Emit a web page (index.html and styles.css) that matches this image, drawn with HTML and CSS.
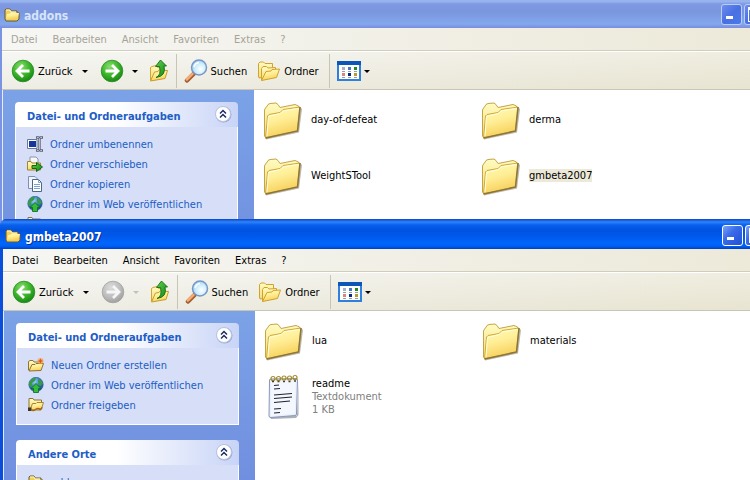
FILE: index.html
```html
<!DOCTYPE html>
<html lang="de">
<head>
<meta charset="utf-8">
<title>gmbeta2007</title>
<link rel="stylesheet" href="styles.css">
</head>
<body>
<svg class="sprite" aria-hidden="true">
  <defs>
    <linearGradient id="g-folder" x1="0" y1="0" x2="0.3" y2="1"><stop offset="0" stop-color="#fffdb8"/><stop offset="0.5" stop-color="#ffee96"/><stop offset="1" stop-color="#f7d05a"/></linearGradient>
    <linearGradient id="g-tab" x1="0" y1="0" x2="0" y2="1"><stop offset="0" stop-color="#fffbc0"/><stop offset="1" stop-color="#f3dc7c"/></linearGradient>
    <radialGradient id="g-green" cx="0.4" cy="0.3" r="0.75"><stop offset="0" stop-color="#8ade70"/><stop offset="0.5" stop-color="#3fb72c"/><stop offset="1" stop-color="#138411"/></radialGradient>
    <radialGradient id="g-grey" cx="0.4" cy="0.3" r="0.75"><stop offset="0" stop-color="#dcdcdc"/><stop offset="0.6" stop-color="#bcbcbc"/><stop offset="1" stop-color="#9c9c9c"/></radialGradient>
    <radialGradient id="g-lens" cx="0.6" cy="0.6" r="0.7"><stop offset="0" stop-color="#ffffff"/><stop offset="0.5" stop-color="#cdeefc"/><stop offset="1" stop-color="#93c8f2"/></radialGradient>
    <radialGradient id="g-globe" cx="0.4" cy="0.3" r="0.8"><stop offset="0" stop-color="#9ad4f6"/><stop offset="0.5" stop-color="#2f78cc"/><stop offset="1" stop-color="#123d86"/></radialGradient>
    <linearGradient id="g-arrow" x1="0" y1="0" x2="1" y2="1"><stop offset="0" stop-color="#5fd34e"/><stop offset="1" stop-color="#118512"/></linearGradient>
  </defs>

  <symbol id="folder-large" viewBox="0 0 48 48">
    <path d="M8 44.500 41 37.500 44 14 42 12 39 36 8 43Z" fill="#6d6244" opacity="0.45"/>
    <path d="M6.500 41V15L7.500 13 8.500 12 10 9.500 12 8.500 18 8 20 9.500 22 12.500 37 9.500 40.500 11 41 15 38 36 8 43Z" fill="url(#g-tab)" stroke="#c5a445"/>
    <path d="M7.500 43 9.500 21 11 19.500 22 17.500 25 14.500 42 12 39.500 36Z" fill="url(#g-folder)" stroke="#d3aa39"/>
    <path d="M9 41 10.500 21.500 22.500 18.500 25.500 15.800 40.500 13.500" fill="none" stroke="#fffde0"/>
    <path d="M7.500 43 39.500 36 42 12" fill="none" stroke="#8b753b" stroke-width="1.500"/>
  </symbol>

  <symbol id="folder-small" viewBox="0 0 16 16">
    <path d="M1 12V3L2 2H6L7 4H13V6H15V12L13 14H2Z" fill="#f1cf5d" stroke="#695a30"/>
    <path d="M2 12 3 7 6 6.500 7 5.500 15 6 13.500 12.500Z" fill="url(#g-folder)"/>
    <path d="M2 3H6L7 5H12" fill="none" stroke="#fffbc8"/>
  </symbol>

  <symbol id="notepad" viewBox="0 0 48 48">
    <path d="M11 45 38 43.500 39.500 10V43L37 46 12 47Z" fill="#747b8c" opacity="0.6"/>
    <path d="M10.500 9Q10 7 12 7L37 6.500Q38.500 6.500 38.500 8L37.500 42Q37.500 43.500 36 43.500L12 45.500Q10 45.500 10 44Z" fill="#e9effc" stroke="#8898b8"/>
    <path d="M12 10 36.500 9 36 41.500 12 44Z" fill="#f4f7fe"/>
    <path d="M15 13.500 20 13M15 17 21 16.500M15 23 33 21.500M15 26.500 33 25M15 30.500 31 29M15 37 22 36.500M15 41 21 40.500" stroke="#1f232d" stroke-width="1.200"/>
    <g fill="none" stroke="#a28b27" stroke-width="1.200"><circle cx="14" cy="6.500" r="2"/><circle cx="19.500" cy="6.500" r="2"/><circle cx="25" cy="6" r="2"/><circle cx="30.500" cy="6" r="2"/><circle cx="36" cy="5.500" r="2"/></g>
    <path d="M13 9.500h2M18.500 9.500h2M24 9.500h2M29.500 9.500h2M35 9h2" stroke="#4b431d" stroke-width="1.500"/>
  </symbol>

  <symbol id="nav-back" viewBox="0 0 24 24">
    <circle cx="12" cy="12" r="10.800" fill="url(#g-green)" stroke="#2b8a24" stroke-width="0.800"/>
    <path d="M18.500 12H7M12 6 6 12 12 18" fill="none" stroke="#fff" stroke-width="2.800"/>
  </symbol>
  <symbol id="nav-forward" viewBox="0 0 24 24">
    <circle cx="12" cy="12" r="10.800" fill="url(#g-green)" stroke="#2b8a24" stroke-width="0.800"/>
    <path d="M5.500 12H17M12 6 18 12 12 18" fill="none" stroke="#fff" stroke-width="2.800"/>
  </symbol>
  <symbol id="nav-forward-off" viewBox="0 0 24 24">
    <circle cx="12" cy="12" r="10.800" fill="url(#g-grey)" stroke="#a2a2a2" stroke-width="0.800"/>
    <path d="M5.500 12H17M12 6 18 12 12 18" fill="none" stroke="#f6f6f6" stroke-width="2.800"/>
  </symbol>

  <symbol id="folder-up" viewBox="0 0 24 24">
    <path d="M3.500 21V8.500L5 7.500 9 6.500 10.500 8.500 16 7.500V19Z" fill="url(#g-tab)" stroke="#d2a62f"/>
    <path d="M3.500 22 7.500 13 11 12.500 12 11 20.500 11.500 18 19.500Z" fill="url(#g-folder)" stroke="#c99c2b"/>
    <path d="M9 18.500Q14.500 16.500 12.500 7.500H8.500L13.500 1 19.500 7H17Q19.500 17 9 18.500Z" fill="url(#g-arrow)" stroke="#156d19" stroke-width="0.900"/>
  </symbol>

  <symbol id="search" viewBox="0 0 24 24">
    <path d="M3 21.500 9.500 15" stroke="#a35e33" stroke-width="4.500" stroke-linecap="round"/>
    <path d="M2.800 20.500 8.500 14.800" stroke="#f5ad72" stroke-width="2.500" stroke-linecap="round"/>
    <circle cx="15" cy="8.500" r="7.500" fill="url(#g-lens)" stroke="#7997c6" stroke-width="1.500"/>
    <path d="M10 8Q11 4 15 3.500" fill="none" stroke="#fff" stroke-width="1.500"/>
  </symbol>

  <symbol id="folders" viewBox="0 0 24 24">
    <path d="M1.500 17V4.500L3 3H6.500L8 4.500H15.500V16L2 19Z" fill="url(#g-tab)" stroke="#d1a22c"/>
    <path d="M4.500 21V9.500L6 7.500H9.500L11 9 18.500 8.500V18Z" fill="url(#g-tab)" stroke="#d1a22c"/>
    <path d="M4.500 21.500 9 12.500 14 12 15 10.500 22.500 10 19.500 18.500Z" fill="url(#g-folder)" stroke="#d1a22c"/>
  </symbol>

  <symbol id="views" viewBox="0 0 24 24">
    <rect x="1" y="3" width="22" height="18" fill="#fff" stroke="#2f7fdc" stroke-width="2"/>
    <path d="M0 2H24V6H0Z" fill="#0b56b7"/>
    <path d="M5 8h3v3H5z" fill="#a9afc7"/><path d="M5 14h3v3H5z" fill="#de8378"/>
    <path d="M11 8h3v3h-3z" fill="#4879c3"/><path d="M11 14h3v3h-3z" fill="#092a83"/>
    <path d="M17 8h3v3h-3z" fill="#228a23"/><path d="M17 14h3v3h-3z" fill="#b49b34"/>
    <path d="M5 12.500h3M11 12.500h3M17 12.500h3M5 18.500h3M11 18.500h3M17 18.500h3" stroke="#9a9ca6"/>
  </symbol>

  <symbol id="chevrons" viewBox="0 0 18 18">
    <circle cx="9.500" cy="9.500" r="8" fill="#7d89b6" opacity="0.6"/>
    <circle cx="9" cy="9" r="7.500" fill="#fff" stroke="#b9c3df"/>
    <path d="M6 8.500 9 5.500 12 8.500M6 12.500 9 9.500 12 12.500" fill="none" stroke="#1c2f63" stroke-width="1.500"/>
  </symbol>

  <symbol id="rename" viewBox="0 0 16 16">
    <path d="M.5 3.500H10V12.500H.5Z" fill="#fff" stroke="#6d7993"/>
    <path d="M2 5H9V11H2Z" fill="#14389f"/>
    <path d="M9 1.500H11.500L12.500 2.500 13.500 1.500H16M12.500 2V14M9 14.500H11.500L12.500 13.500 13.500 14.500H16" fill="none" stroke="#5c6376" stroke-width="2.400"/>
    <path d="M10 1.500H11.500L12.500 2.500 13.500 1.500H15M12.500 3V13M10 14.500H11.500L12.500 13.500 13.500 14.500H15" fill="none" stroke="#c5cada" stroke-width="0.900"/>
  </symbol>
  <symbol id="move" viewBox="0 0 16 16">
    <path d="M3 1H9L11 3V9H3Z" fill="#f6f8fd" stroke="#8e94a2"/>
    <path d="M.5 14V5.500H4L5 7H13.500V14Z" fill="url(#g-folder)" stroke="#a38334"/>
    <path d="M5 9.500H9.500V6.500L15.500 11 9.500 15.500V12.500H5Z" fill="url(#g-arrow)" stroke="#146718"/>
  </symbol>
  <symbol id="copy" viewBox="0 0 16 16">
    <path d="M1.500.5H8L10.500 3V12.500H1.500Z" fill="#eef3fd" stroke="#7c90b1"/>
    <path d="M5.500 3.500H11.500L14.500 6.500V15.500H5.500Z" fill="#fff" stroke="#4c678c"/>
    <path d="M11.500 3.500V6.500H14.500M7 8.500H13M7 10.500H13M7 12.500H13" fill="none" stroke="#79a3ca"/>
  </symbol>
  <symbol id="publish" viewBox="0 0 16 16">
    <circle cx="8" cy="7.500" r="7.200" fill="url(#g-globe)" stroke="#24589a" stroke-width="0.600"/>
    <path d="M2 4Q5 0 8 1L7 4 4 6 4.500 9 2 10Q0 7 2 4ZM10 2Q14 3 15 7L12 9 10 6Z" fill="#3a9b46"/>
    <path d="M8 6.500 13 11.500H10.500V15.500H5.500V11.500H3Z" fill="#35bb35" stroke="#0c671c" stroke-width="0.800"/>
  </symbol>
  <symbol id="new-folder" viewBox="0 0 16 16">
    <path d="M.5 13V4.500L2 3.500H5L6 5H12.500V13Z" fill="url(#g-tab)" stroke="#927332"/>
    <path d="M1 14 4 7.500H7L8 6.500H15.500L13 13.500Z" fill="url(#g-folder)" stroke="#927332"/>
    <circle cx="12.500" cy="4" r="3" fill="#f3a04c" opacity="0.8"/>
    <path d="M12.500 1.500 13.200 3.300 15 4 13.200 4.700 12.500 6.500 11.800 4.700 10 4 11.800 3.300Z" fill="#e2501e"/>
  </symbol>
  <symbol id="share" viewBox="0 0 16 16">
    <path d="M1 12V1.500H5L6 3H13.500V12Z" fill="url(#g-tab)" stroke="#927332"/>
    <path d="M2 13 4.500 6.500H8L9 5.500H15.500L13 13Z" fill="url(#g-folder)" stroke="#a88434"/>
    <path d="M0 10.500H3.500V14H0Z" fill="#3d3729"/>
    <path d="M3 12.500Q5 14.500 7.500 12.500T12 12.500L14.500 10.500" fill="none" stroke="#a4661f" stroke-width="1.500"/>
  </symbol>
</svg>

<main class="desktop">
  <section class="window window-inactive">
    <header class="titlebar">
      <svg class="icon-16"><use href="#folder-small"/></svg>
      <h1 class="title">addons</h1>
      <div class="controls">
        <button class="control minimize" aria-label="Minimieren"></button>
        <button class="control maximize" aria-label="Maximieren"></button>
        <button class="control close" aria-label="Schließen"></button>
      </div>
    </header>
    <nav class="menubar">
      <button>Datei</button><button>Bearbeiten</button><button>Ansicht</button><button>Favoriten</button><button>Extras</button><button>?</button>
    </nav>
    <div class="toolbar">
      <button class="tool back"><svg class="icon-24"><use href="#nav-back"/></svg>Zurück<i class="caret"></i></button>
      <button class="tool forward" aria-label="Vorwärts"><svg class="icon-24"><use href="#nav-forward"/></svg><i class="caret"></i></button>
      <button class="tool up" aria-label="Aufwärts"><svg class="icon-24"><use href="#folder-up"/></svg></button>
      <span class="divider"></span>
      <button class="tool"><svg class="icon-24"><use href="#search"/></svg>Suchen</button>
      <button class="tool"><svg class="icon-24"><use href="#folders"/></svg>Ordner</button>
      <span class="divider"></span>
      <button class="tool views" aria-label="Ansichten"><svg class="icon-24"><use href="#views"/></svg><i class="caret"></i></button>
    </div>
    <div class="content">
      <aside class="taskpane">
        <section class="group">
          <header class="group-head"><h2>Datei- und Ordneraufgaben</h2><button class="collapse" aria-label="Einklappen"><svg><use href="#chevrons"/></svg></button></header>
          <ul class="tasks">
            <li><a href="#"><svg class="icon-16"><use href="#rename"/></svg>Ordner umbenennen</a></li>
            <li><a href="#"><svg class="icon-16"><use href="#move"/></svg>Ordner verschieben</a></li>
            <li><a href="#"><svg class="icon-16"><use href="#copy"/></svg>Ordner kopieren</a></li>
            <li><a href="#"><svg class="icon-16"><use href="#publish"/></svg>Ordner im Web veröffentlichen</a></li>
            <li><a href="#" aria-label="Ordner freigeben"><svg class="icon-16"><use href="#share"/></svg></a></li>
          </ul>
        </section>
      </aside>
      <ul class="files">
        <li class="file"><svg class="icon-48"><use href="#folder-large"/></svg><span class="name">day-of-defeat</span></li>
        <li class="file"><svg class="icon-48"><use href="#folder-large"/></svg><span class="name">derma</span></li>
        <li class="file"><svg class="icon-48"><use href="#folder-large"/></svg><span class="name">WeightSTool</span></li>
        <li class="file selected"><svg class="icon-48"><use href="#folder-large"/></svg><span class="name">gmbeta2007</span></li>
      </ul>
    </div>
  </section>

  <section class="window window-active">
    <header class="titlebar">
      <svg class="icon-16"><use href="#folder-small"/></svg>
      <h1 class="title">gmbeta2007</h1>
      <div class="controls">
        <button class="control minimize" aria-label="Minimieren"></button>
        <button class="control maximize" aria-label="Maximieren"></button>
        <button class="control close" aria-label="Schließen"></button>
      </div>
    </header>
    <nav class="menubar">
      <button>Datei</button><button>Bearbeiten</button><button>Ansicht</button><button>Favoriten</button><button>Extras</button><button>?</button>
    </nav>
    <div class="toolbar">
      <button class="tool back"><svg class="icon-24"><use href="#nav-back"/></svg>Zurück<i class="caret"></i></button>
      <button class="tool forward" aria-label="Vorwärts" disabled><svg class="icon-24"><use href="#nav-forward-off"/></svg><i class="caret"></i></button>
      <button class="tool up" aria-label="Aufwärts"><svg class="icon-24"><use href="#folder-up"/></svg></button>
      <span class="divider"></span>
      <button class="tool"><svg class="icon-24"><use href="#search"/></svg>Suchen</button>
      <button class="tool"><svg class="icon-24"><use href="#folders"/></svg>Ordner</button>
      <span class="divider"></span>
      <button class="tool views" aria-label="Ansichten"><svg class="icon-24"><use href="#views"/></svg><i class="caret"></i></button>
    </div>
    <div class="content">
      <aside class="taskpane">
        <section class="group">
          <header class="group-head"><h2>Datei- und Ordneraufgaben</h2><button class="collapse" aria-label="Einklappen"><svg><use href="#chevrons"/></svg></button></header>
          <ul class="tasks">
            <li><a href="#"><svg class="icon-16"><use href="#new-folder"/></svg>Neuen Ordner erstellen</a></li>
            <li><a href="#"><svg class="icon-16"><use href="#publish"/></svg>Ordner im Web veröffentlichen</a></li>
            <li><a href="#"><svg class="icon-16"><use href="#share"/></svg>Ordner freigeben</a></li>
          </ul>
        </section>
        <section class="group">
          <header class="group-head"><h2>Andere Orte</h2><button class="collapse" aria-label="Einklappen"><svg><use href="#chevrons"/></svg></button></header>
          <ul class="tasks">
            <li><a href="#"><svg class="icon-16"><use href="#folder-small"/></svg>addons</a></li>
          </ul>
        </section>
      </aside>
      <ul class="files">
        <li class="file"><svg class="icon-48"><use href="#folder-large"/></svg><span class="name">lua</span></li>
        <li class="file"><svg class="icon-48"><use href="#folder-large"/></svg><span class="name">materials</span></li>
        <li class="file"><svg class="icon-48"><use href="#notepad"/></svg><div><span class="name">readme</span><p class="meta">Textdokument</p><p class="meta">1 KB</p></div></li>
      </ul>
    </div>
  </section>
</main>
</body>
</html>
```
FILE: styles.css
```css
* {
  box-sizing: border-box;
}

body {
  margin: 0;
  font: 11px/13px "DejaVu Sans Condensed", "Noto Sans", sans-serif;
  color: #000;
}

h1, h2, p, ul {
  margin: 0;
  padding: 0;
  list-style: none;
}

button {
  padding: 0;
  border: 0;
  background: none;
  font: inherit;
  color: inherit;
}

svg {
  display: block;
  flex: none;
}

.sprite {
  position: absolute;
  width: 0;
  height: 0;
}

.icon-16 { width: 16px; height: 16px; }
.icon-24 { width: 24px; height: 24px; }
.icon-48 { width: 48px; height: 48px; }

.desktop {
  position: relative;
  height: 100vh;
  overflow: hidden;
  background: #7b9ee6;
}

/* Windows are placed freely on the desktop and run past its right edge. */
.window {
  position: absolute;
  display: flex;
  flex-direction: column;
  width: calc(100% + 44px);
  height: 330px;
  padding: 0 3px;
}

.window-inactive {
  top: -2px;
  left: -1px;
  background: #7b93e3;
}

.window-active {
  top: 219px;
  left: 0;
  background: #0a4fdc;
  border-radius: 7px 7px 0 0;
}

/* Title bar */
.titlebar {
  display: flex;
  flex: none;
  align-items: center;
  gap: 4px;
  height: 30px;
  margin: 0 -3px;
  padding: 3px 5px 0;
}

.window-inactive .titlebar {
  background: linear-gradient(#7b97e0, #9db9f0 3px, #7f9ae2 6px, #7a96df 14px, #7f9fe6 20px, #83a8ec 26px, #7a8ce0 30px);
}

.window-active .titlebar {
  border-radius: 7px 7px 0 0;
  background: linear-gradient(#0a46c4, #2f83fb 3px, #0a5fec 6px, #0053e1 11px, #0058ea 17px, #0066fc 24px, #0060f5 27px, #0040c4 30px);
}

.title {
  padding-top: 2px;
  font: bold 12px/16px "DejaVu Sans Condensed", "Noto Sans", sans-serif;
  color: #fff;
  text-shadow: 1px 1px #0a2f8c;
}

.window-inactive .title {
  color: #d8e4f8;
  text-shadow: none;
}

.controls {
  display: flex;
  gap: 2px;
  margin-left: auto;
}

.control {
  display: grid;
  place-items: center;
  width: 21px;
  height: 21px;
  border: 1px solid #fff;
  border-radius: 3px;
  background: linear-gradient(135deg, #7fa2f7, #3a6bea 40%, #2a5be0 75%, #2352c8);
}

.window-inactive .control {
  border-color: #b9cdf6;
  background: linear-gradient(135deg, #6a8df0, #4a70e2 50%, #4a79ea);
}

.control::before {
  content: "";
  width: 11px;
  height: 11px;
  border: solid #fff;
  border-width: 3px 1px 1px;
}

.minimize::before {
  width: 7px;
  height: 3px;
  margin: 9px 4px 0 0;
  border-width: 3px 0 0;
}

/* Menu bar and toolbar */
.menubar,
.toolbar {
  display: flex;
  flex: none;
  align-items: center;
}

.menubar {
  gap: 15px;
  height: 23px;
  padding-left: 9px;
  border-bottom: 1px solid #d0cdbd;
  background: linear-gradient(90deg, #f6f6f4, #ece9d8);
}

.window-inactive .menubar {
  color: #a5a497;
}

.toolbar {
  height: 39px;
  padding: 1px 0 0 9px;
  border-top: 1px solid #fff;
  border-bottom: 1px solid #c9c6b8;
  background: linear-gradient(rgba(255, 255, 255, 0.2), rgba(215, 210, 180, 0.2)), linear-gradient(90deg, #f4f4f1, #ebe8d7);
}

.tool {
  display: flex;
  align-items: center;
  gap: 3px;
  margin-right: 10px;
}

.caret {
  width: 0;
  border: solid transparent;
  border-width: 3px 3px 0;
  border-top-color: #000;
}

.back .caret {
  margin-left: 6px;
}

.back {
  margin-right: 12px;
}

.forward {
  gap: 8px;
  margin-right: 9px;
}

.forward:disabled .caret {
  border-top-color: #c3c1b6;
}

.up {
  margin-right: 5px;
}

.divider {
  align-self: stretch;
  width: 1px;
  margin: 1px 7px 1px 0;
  background: #c8c5b5;
}

/* Folder contents */
.content {
  display: flex;
  flex: 1;
  background: #fff;
}

.taskpane {
  display: flex;
  flex: none;
  flex-direction: column;
  gap: 15px;
  width: 252px;
  padding: 12px 16px 0 12px;
  border-left: 1px solid #e4ecfb;
  background: linear-gradient(#7ba2e7, #6375d6 400px);
}

.group-head {
  display: flex;
  align-items: center;
  justify-content: space-between;
  height: 25px;
  padding: 0 6px 2px 12px;
  border-radius: 4px 4px 0 0;
  background: linear-gradient(90deg, #fff 45%, #c8d4f7);
  color: #215dc6;
}

.group-head h2 {
  padding-top: 6px;
  font-size: 11px;
  line-height: 13px;
}

.collapse svg {
  width: 18px;
  height: 18px;
}

.tasks {
  padding: 7px 11px 9px;
  border: solid #fff;
  border-width: 0 1px 1px;
  background: #d6dff7;
}

.tasks a {
  display: flex;
  align-items: center;
  gap: 7px;
  height: 20px;
  color: #215dc6;
  text-decoration: none;
  white-space: nowrap;
}

.files {
  display: grid;
  flex: 1;
  grid-template-columns: repeat(auto-fill, 218px);
  grid-auto-rows: 56px;
  align-content: start;
  padding: 1px 0 0 4px;
}

.file {
  display: flex;
  align-items: center;
  gap: 5px;
}

.selected .name {
  background: #ece9d8;
}

.meta {
  color: #808080;
}
```
